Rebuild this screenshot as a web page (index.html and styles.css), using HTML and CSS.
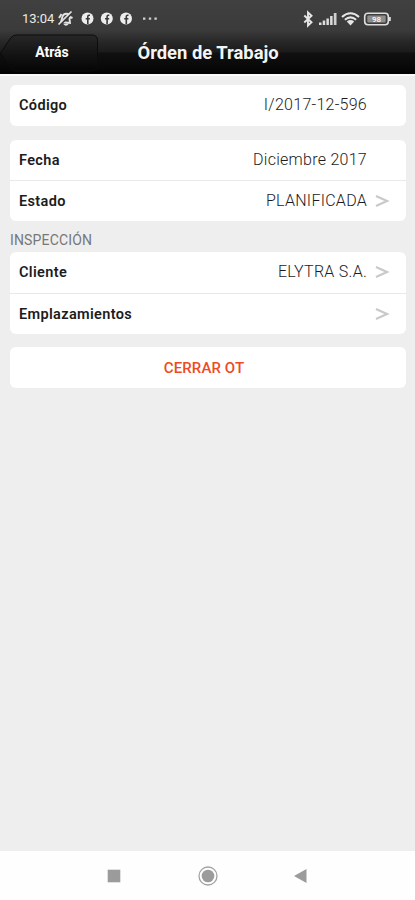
FILE: index.html
```html
<!DOCTYPE html>
<html lang="es">
<head>
    <meta charset="UTF-8">
    <title>Órden de Trabajo</title>
    <link rel="stylesheet" href="styles.css">
</head>
<body>
    <div id="app">
        <header class="top">
            <div class="status">
                <span class="time">13:04</span>
                <svg class="bell" width="17" height="17" viewBox="0 0 17 17">
                    <path d="M4 12 L5.500 6.500 Q7 3 11 4 Q14 6 12.500 9 L13 13 Z M7 13.500 q2 2.500 4 0 M2 8 l2.500 -4 M13 7 l2.500 1" fill="none" stroke="#e4e4e4" stroke-width="1.900"/>
                    <path d="M2.500 15.500 L15.500 2.500" stroke="#3b3b3b" stroke-width="2"/>
                    <path d="M1.500 14.500 L14.500 1.500" stroke="#e4e4e4" stroke-width="1.700"/>
                </svg>
                <svg class="fb" width="52" height="13" viewBox="0 0 52 13">
                    <g id="fb">
                        <circle cx="6.500" cy="6.500" r="6" fill="#ededed"/>
                        <path d="M9 3.300 H8 Q6.800 3.300 6.800 4.600 V12 M4.700 6.800 H8.900" fill="none" stroke="#3b3b3b" stroke-width="1.600"/>
                    </g>
                    <use href="#fb" x="19.300"/>
                    <use href="#fb" x="38.500"/>
                </svg>
                <svg class="dots" width="16" height="4" viewBox="0 0 16 4">
                    <path d="M1 0.500h2.400v2.200H1z M6.800 0.500h2.400v2.200H6.800z M12.400 0.500h2.400v2.200h-2.400z" fill="#d0d0d0"/>
                </svg>
                <svg class="signals" width="92" height="18" viewBox="0 0 92 18">
                    <path d="M2.300 5.500 L9.500 12.300 L6 15.500 V2.500 L9.500 5.700 L2.300 12.500" fill="none" stroke="#e6e6e6" stroke-width="1.900"/>
                    <path d="M17 12.500h2.500V15H17z M20.700 10.500h2.500V15h-2.500z M24.400 8.500h2.500V15h-2.500z M28.100 6h2.500v9h-2.500z" fill="#dcdcdc"/>
                    <path d="M31.800 3h2.700v12h-2.700z" fill="#cfcfcf"/>
                    <path d="M40 7 Q48.500 -0.500 57 7 M42.900 9.800 Q48.500 5 54.100 9.800" fill="none" stroke="#e6e6e6" stroke-width="2.100"/>
                    <path d="M44.800 11.500 Q48.500 8.700 52.200 11.500 L48.500 15.500 Z" fill="#e6e6e6"/>
                    <rect x="62.700" y="3.200" width="23.600" height="11.600" rx="3.200" fill="none" stroke="#dedede" stroke-width="1.600"/>
                    <rect x="65.300" y="5.400" width="18.400" height="7.200" rx="1" fill="#8d8d8d"/>
                    <path d="M87 7h1.800v4H87z" fill="#dedede"/>
                    <text x="74.500" y="12" text-anchor="middle" class="charge">98</text>
                </svg>
            </div>
            <div class="toolbar">
                <svg class="shape" width="100" height="40" viewBox="0 0 100 40">
                    <defs>
                        <linearGradient id="btn" x1="0" y1="0" x2="0" y2="1">
                            <stop offset="0" stop-color="#272727"/>
                            <stop offset="0.500" stop-color="#151515"/>
                            <stop offset="1" stop-color="#050505"/>
                        </linearGradient>
                    </defs>
                    <path d="M0.500 19 L10 5 Q12.500 1 16 1 H92 Q97.500 1 97.500 6.500 V31.500 Q97.500 37 92 37 H16 Q12.500 37 10 33 Z" fill="url(#btn)" stroke="#0c0c0c" stroke-width="1"/>
                </svg>
                <span class="back">Atrás</span>
                <h1>Órden de Trabajo</h1>
            </div>
        </header>

        <main>
            <ul class="list">
                <li><b>Código</b><span class="value">I/2017-12-596</span></li>
            </ul>
            <ul class="list">
                <li><b>Fecha</b><span class="value">Diciembre 2017</span></li>
                <li>
                    <b>Estado</b><span class="value">PLANIFICADA</span>
                    <svg class="arrow" width="14" height="14" viewBox="0 0 14 14"><path d="M1 2 L12 7 L1 12"/></svg>
                </li>
            </ul>
            <h2>INSPECCIÓN</h2>
            <ul class="list">
                <li>
                    <b>Cliente</b><span class="value">ELYTRA S.A.</span>
                    <svg class="arrow" width="14" height="14" viewBox="0 0 14 14"><path d="M1 2 L12 7 L1 12"/></svg>
                </li>
                <li>
                    <b>Emplazamientos</b><span class="value"></span>
                    <svg class="arrow" width="14" height="14" viewBox="0 0 14 14"><path d="M1 2 L12 7 L1 12"/></svg>
                </li>
            </ul>
            <div class="close">CERRAR OT</div>
        </main>

        <footer class="nav">
            <svg width="14" height="14" viewBox="0 0 14 14"><rect x="0.700" y="0.700" width="12.600" height="12.600" fill="#9b9b9b"/></svg>
            <svg width="20" height="20" viewBox="0 0 20 20">
                <circle cx="10" cy="10" r="9" fill="none" stroke="#a3a3a3" stroke-width="1.300"/>
                <circle cx="10" cy="10" r="6.300" fill="#9b9b9b"/>
            </svg>
            <svg width="14" height="16" viewBox="0 0 14 16"><path d="M-1 8 L11.500 1 V15 Z" fill="#9b9b9b"/></svg>
        </footer>
    </div>
</body>
</html>
```
FILE: styles.css
```css
*{
    margin: 0;
    padding: 0;
    box-sizing: border-box;
}
ul {
    list-style: none;
}
body{
    font-family: Roboto, "Liberation Sans", sans-serif;
    background-color: #eeeeee;
}
svg{
    display: block;
    flex: none;
    overflow: visible;
}
#app{
    width: 415px;
    height: 900px;
    display: flex;
    flex-direction: column;
}

/* cabecera */
.top{
    height: 74px;
    background: linear-gradient(#404040 0, #3b3b3b 30px, #272727 42px, #1b1b1b 52px, #101010 53px, #080808 68px, #000 74px);
    color: white;
}
.status{
    height: 33px;
    padding: 4px 21px 0 22px;
    display: flex;
    align-items: center;
}
.time{
    width: 35px;
    font-size: 13px;
    color: #eaeaea;
    white-space: nowrap;
}
.bell{
    margin-right: 7px;
}
.dots{
    margin-left: 9px;
}
.signals{
    margin-left: auto;
}
.charge{
    font-size: 8px;
    font-weight: 700;
    fill: #eeeeee;
}
.toolbar{
    height: 41px;
    display: grid;
    grid-template-columns: 100px 1fr;
    align-items: center;
}
.shape, .back{
    grid-area: 1 / 1;
}
.back{
    padding: 0 0 4px 4px;
    text-align: center;
    font-size: 14px;
    font-weight: 700;
}
h1{
    padding: 0 0 2px 37.5px;
    font-size: 18.4px;
    font-weight: 700;
    line-height: 24px;
    white-space: nowrap;
    color: #f4f4f4;
}

/* contenido */
main{
    flex: 1;
    padding: 9px 9px 0 10px;
    border-top: 2px solid #fafafa;
}
.list{
    margin-bottom: 13.8px;
    background-color: white;
    border-radius: 6px;
}
.list li{
    height: 40.8px;
    padding: 0 16px 0 9px;
    display: flex;
    align-items: center;
    font-size: 14.5px;
}
.list li + li{
    border-top: 1px solid #e9e9e9;
}
.list b{
    padding-top: 1px;
    font-weight: 600;
    letter-spacing: 0.35px;
    color: #1c1c1c;
}
.value{
    margin-left: auto;
    margin-right: 23px;
    padding-bottom: 1px;
    font-size: 16px;
    font-weight: 300;
    letter-spacing: 0.27px;
    color: #1c1c1c;
}
.arrow{
    margin-left: -15px;
    margin-right: 1px;
}
.arrow path{
    fill: none;
    stroke: #c9c9c9;
    stroke-width: 2.2;
}
h2{
    height: 17px;
    font-size: 14px;
    font-weight: 400;
    line-height: 11px;
    letter-spacing: 0.15px;
    color: #777777;
}
.close{
    height: 41px;
    background-color: white;
    border-radius: 6px;
    color: #ee4a24;
    font-size: 15px;
    font-weight: 500;
    letter-spacing: 0.1px;
    line-height: 43px;
    text-align: center;
    padding-right: 8px;
}

/* barra de navegacion */
.nav{
    height: 49px;
    background-color: #fefefe;
    display: flex;
    justify-content: center;
    align-items: center;
    gap: 77px;
}
```
